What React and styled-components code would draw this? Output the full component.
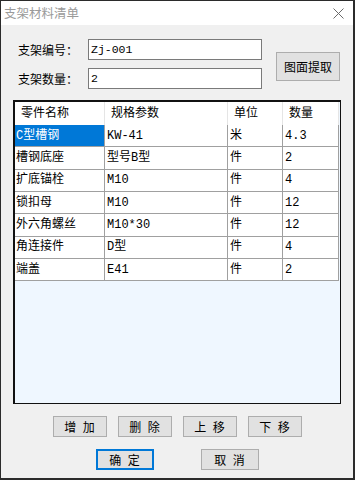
import React from "react";
import styled, { createGlobalStyle } from "styled-components";

const Global = createGlobalStyle`
  html, body { margin: 0; padding: 0; background: #ffffff; }
  * { box-sizing: border-box; }
`;

const CJK = `"Noto Sans CJK SC", "Noto Sans", sans-serif`;
const MONO = `"Liberation Mono", "Noto Sans CJK SC", monospace`;

const Window = styled.div`
  width: 355px;
  height: 480px;
  display: flex;
  flex-direction: column;
  border-left: 1px solid #2b2b2b;
  border-top: 1px solid #2b2b2b;
  border-right: 2px solid #2b2b2b;
  border-bottom: 2px solid #2b2b2b;
  font-family: ${CJK};
  font-size: 12px;
  color: #000;
`;

const TitleBar = styled.div`
  height: 24px;
  background: #ffffff;
  display: flex;
  align-items: center;
  justify-content: space-between;
  padding: 0 9px 0 3px;
`;

const Title = styled.span`
  font-size: 12.5px;
  line-height: 14px;
  color: #9a9a9a;
`;

const Body = styled.div`
  flex: 1;
  background: #f0f0f0;
  display: flex;
  flex-direction: column;
  padding: 14px 12px 0 12px;
`;

const TopSection = styled.div`
  display: flex;
  align-items: flex-start;
`;

const Fields = styled.div`
  display: flex;
  flex-direction: column;
  gap: 8px;
  padding-left: 5px;
`;

const FieldRow = styled.div`
  display: flex;
  align-items: center;
`;

const Label = styled.span`
  width: 70px;
  line-height: 14px;
`;

const Input = styled.div`
  width: 174px;
  height: 21px;
  background: #fff;
  border: 1px solid #7a7a7a;
  display: flex;
  align-items: center;
  padding-left: 2px;
  font-family: ${MONO};
  font-size: 11.5px;
  line-height: 14px;
`;

const Button = styled.button`
  width: ${(p) => p.$w}px;
  height: ${(p) => p.$h}px;
  margin: 0;
  padding: 0;
  background: #e1e1e1;
  border: ${(p) => (p.$default ? "2px solid #0078d7" : "1px solid #adadad")};
  font-family: ${CJK};
  font-size: 12px;
  line-height: 14px;
  color: #000;
  word-spacing: ${(p) => (p.$spaced ? "4px" : "0")};
  display: flex;
  align-items: center;
  justify-content: center;
`;

const ExtractButton = styled(Button)`
  margin-left: 14px;
  margin-top: 13px;
`;

const TableBox = styled.div`
  margin-top: 11px;
  width: 328px;
  height: 304px;
  background: #eff7ff;
  border-top: 2px solid #111;
  border-left: 2px solid #111;
  border-right: 1px solid #111;
  border-bottom: 1px solid #111;
`;

const Grid = styled.div`
  display: grid;
  grid-template-columns: 90px 123px 55px 56px;
  grid-template-rows: 23px;
  grid-auto-rows: 22.33px;
`;

const HeadCell = styled.div`
  background: #fff;
  border-right: 1px solid #e5e5e5;
  display: flex;
  align-items: center;
  padding: 0 0 3px 6px;
  line-height: 14px;
  font-size: 12px;
`;

const Cell = styled.div`
  background: ${(p) => (p.$selected ? "#0078d7" : "#fff")};
  color: ${(p) => (p.$selected ? "#fff" : "#000")};
  border-right: 1px solid #a0a0a0;
  border-bottom: 1px solid #a0a0a0;
  display: flex;
  align-items: center;
  padding-left: ${(p) => (p.$first ? "1px" : "2px")};
  font-family: ${MONO};
  font-size: 12px;
  line-height: 14px;
  white-space: nowrap;
  overflow: hidden;
`;

const ButtonRow = styled.div`
  display: flex;
  justify-content: center;
  gap: ${(p) => p.$gap}px;
  margin-top: 12px;
`;

const CloseIcon = () => (
  <svg width="11" height="11" viewBox="0 0 11 11">
    <path d="M0.5 0.5 L10.5 10.5 M10.5 0.5 L0.5 10.5" stroke="#6a6a6a" strokeWidth="1" fill="none" />
  </svg>
);

const rows = [
  ["C型槽钢", "KW-41", "米", "4.3"],
  ["槽钢底座", "型号B型", "件", "2"],
  ["扩底锚栓", "M10", "件", "4"],
  ["锁扣母", "M10", "件", "12"],
  ["外六角螺丝", "M10*30", "件", "12"],
  ["角连接件", "D型", "件", "4"],
  ["端盖", "E41", "件", "2"],
];

const headers = ["零件名称", "规格参数", "单位", "数量"];

export default function App() {
  return (
    <>
      <Global />
      <Window>
        <TitleBar>
          <Title>支架材料清单</Title>
          <CloseIcon />
        </TitleBar>
        <Body>
          <TopSection>
            <Fields>
              <FieldRow>
                <Label>支架编号：</Label>
                <Input>Zj-001</Input>
              </FieldRow>
              <FieldRow>
                <Label>支架数量：</Label>
                <Input>2</Input>
              </FieldRow>
            </Fields>
            <ExtractButton $w={64} $h={29}>图面提取</ExtractButton>
          </TopSection>
          <TableBox>
            <Grid>
              {headers.map((h) => (
                <HeadCell key={h}>{h}</HeadCell>
              ))}
              {rows.map((r, i) =>
                r.map((c, j) => (
                  <Cell key={`${i}-${j}`} $selected={i === 0 && j === 0} $first={j === 0}>
                    {c}
                  </Cell>
                ))
              )}
            </Grid>
          </TableBox>
          <ButtonRow $gap={11}>
            <Button $w={54} $h={21} $spaced>增 加</Button>
            <Button $w={54} $h={21} $spaced>删 除</Button>
            <Button $w={54} $h={21} $spaced>上 移</Button>
            <Button $w={54} $h={21} $spaced>下 移</Button>
          </ButtonRow>
          <ButtonRow $gap={47}>
            <Button $w={58} $h={21} $default $spaced>确 定</Button>
            <Button $w={58} $h={21} $spaced>取 消</Button>
          </ButtonRow>
        </Body>
      </Window>
    </>
  );
}
